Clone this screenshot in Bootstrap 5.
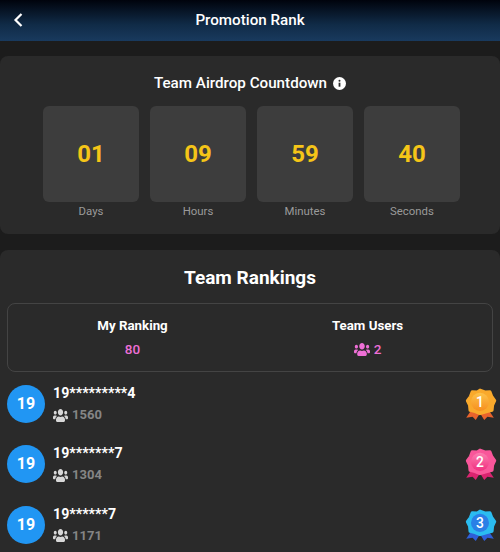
<!DOCTYPE html>
<html lang="en">

<head>
    <meta charset="UTF-8">
    <meta name="viewport" content="width=device-width, initial-scale=1.0">
    <title>Promotion Rank</title>
    <link href="https://cdn.jsdelivr.net/npm/bootstrap@5.3.0/dist/css/bootstrap.min.css" rel="stylesheet">
    <style>
        html, body {
            height: 552px;
            overflow: hidden;
        }

        body {
            background-color: #1c1c1c;
            color: #fff;
            font-family: Roboto, "Liberation Sans", sans-serif;
        }

        .top-bar {
            height: 41px;
            background: linear-gradient(to bottom, #00030c 0%, #102b47 60%, #193a5e 100%);
            position: relative;
        }

        .top-bar h1 {
            font-size: 15.2px;
            font-weight: 500;
            margin: 0;
            line-height: 40px;
        }

        .back-btn {
            position: absolute;
            left: 13px;
            top: 13px;
        }

        .panel {
            background-color: #2a2a2a;
            border-radius: 8px;
        }

        .countdown-panel {
            margin-top: 15px;
            height: 178px;
            padding-top: 18px;
        }

        .countdown-title {
            font-size: 15.2px;
            font-weight: 500;
            line-height: 19px;
            margin-bottom: 13px;
            gap: 6px;
        }

        .time-col {
            width: 96px;
        }

        .time-box {
            height: 96px;
            background-color: #3d3d3d;
            border-radius: 6px;
            color: #f5c518;
            font-size: 24px;
            font-weight: 700;
        }

        .time-label {
            font-size: 11.4px;
            color: #9a9a9a;
            line-height: 14px;
            margin-top: 2px;
        }

        .time-row {
            gap: 11px;
            padding-left: 43px;
        }

        .rank-panel {
            margin-top: 16px;
            height: 320px;
            padding: 16px 7px 0;
        }

        .rank-title {
            font-size: 19px;
            font-weight: 700;
            line-height: 24px;
            margin-bottom: 13px;
        }

        .summary-box {
            height: 69px;
            border: 1px solid #444;
            border-radius: 8px;
            margin-bottom: 13px;
            padding: 0 7px;
        }

        .summary-label {
            font-size: 13.3px;
            font-weight: 700;
            line-height: 17px;
            margin-bottom: 7px;
        }

        .summary-value {
            font-size: 13.5px;
            font-weight: 500;
            line-height: 17px;
            color: #ee6fd6;
        }

        .rank-row {
            height: 38px;
            margin-bottom: 22.4px;
        }

        .avatar {
            width: 38px;
            height: 38px;
            border-radius: 50%;
            background-color: #2196f3;
            font-size: 16px;
            font-weight: 700;
        }

        .user-name {
            font-size: 14.2px;
            font-weight: 700;
            line-height: 17px;
        }

        .user-count {
            font-size: 13px;
            font-weight: 700;
            color: #858585;
            line-height: 16px;
            margin-top: 5px;
        }

        .user-count svg {
            color: #d8d8d8;
        }

        .medal {
            width: 34px;
            height: 34px;
            margin-right: -3.5px;
        }

        .medal text {
            font-family: Roboto, sans-serif;
            font-size: 13px;
            font-weight: 500;
            fill: #fff;
            text-anchor: middle;
        }
    </style>
</head>

<body>
    <svg width="0" height="0" class="position-absolute">
        <defs>
            <symbol id="users" viewBox="0 32 640 448" preserveAspectRatio="none">
                <path fill="currentColor" d="M96 224c35.300 0 64-28.700 64-64s-28.700-64-64-64-64 28.700-64 64 28.700 64 64 64zm448 0c35.300 0 64-28.700 64-64s-28.700-64-64-64-64 28.700-64 64 28.700 64 64 64zm32 32h-64c-17.600 0-33.500 7.100-45.100 18.600 40.300 22.100 68.900 62 75.100 109.400h66c17.700 0 32-14.300 32-32v-32c0-35.300-28.700-64-64-64zm-256 0c61.900 0 112-50.100 112-112S381.900 32 320 32 208 82.100 208 144s50.100 112 112 112zm76.800 32h-8.300c-20.800 10-43.900 16-68.500 16s-47.600-6-68.500-16h-8.300C179.600 288 128 339.600 128 403.200V432c0 26.500 21.500 48 48 48h288c26.500 0 48-21.500 48-48v-28.800c0-63.600-51.600-115.200-115.200-115.200zm-223.700-13.400C161.500 263.100 145.600 256 128 256H64c-35.300 0-64 28.700-64 64v32c0 17.700 14.300 32 32 32h65.900c6.300-47.400 34.900-87.300 75.200-109.400z" />
            </symbol>
            <symbol id="badge" viewBox="0 0 32 32">
                <path d="M16 3l4.500 1.800 4.800-.2 1.700 4.400 2.800 3.800-2 4.200-.5 4.800-4.600 1.200L16 25l-4.700-1.900-4.600-1.200-.5-4.800-2-4.200L7 9l1.700-4.400 4.800.2z" fill="currentColor" stroke="currentColor" stroke-width="3" stroke-linejoin="round" />
            </symbol>
            <linearGradient id="gold" x1="0" y1="0" x2="0" y2="1">
                <stop offset="0" stop-color="#fcc24a" />
                <stop offset="1" stop-color="#f78f1e" />
            </linearGradient>
            <linearGradient id="pink" x1="0" y1="0" x2="0" y2="1">
                <stop offset="0" stop-color="#fb7db0" />
                <stop offset="1" stop-color="#f0307f" />
            </linearGradient>
            <linearGradient id="aqua" x1="0" y1="0" x2="0" y2="1">
                <stop offset="0" stop-color="#45d0f5" />
                <stop offset="1" stop-color="#1f8fe6" />
            </linearGradient>
        </defs>
    </svg>

    <div class="top-bar text-center">
        <a class="back-btn d-block" href="#">
            <svg width="11" height="14" viewBox="0 0 11 14" class="d-block">
                <path d="M8.500 1L2.500 7l6 6" fill="none" stroke="#fff" stroke-width="2.200" />
            </svg>
        </a>
        <h1>Promotion Rank</h1>
    </div>

    <div class="panel countdown-panel">
        <div class="countdown-title d-flex justify-content-center align-items-center">
            <span>Team Airdrop Countdown</span>
            <svg width="13" height="13" viewBox="0 0 13 13">
                <circle cx="6.500" cy="6.500" r="6.500" fill="#fff" />
                <rect x="5.600" y="5.700" width="1.800" height="4" fill="#2a2a2a" />
                <circle cx="6.500" cy="3.800" r="1" fill="#2a2a2a" />
            </svg>
        </div>
        <div class="d-flex time-row">
            <div class="time-col text-center">
                <div class="time-box d-flex align-items-center justify-content-center">01</div>
                <div class="time-label">Days</div>
            </div>
            <div class="time-col text-center">
                <div class="time-box d-flex align-items-center justify-content-center">09</div>
                <div class="time-label">Hours</div>
            </div>
            <div class="time-col text-center">
                <div class="time-box d-flex align-items-center justify-content-center">59</div>
                <div class="time-label">Minutes</div>
            </div>
            <div class="time-col text-center">
                <div class="time-box d-flex align-items-center justify-content-center">40</div>
                <div class="time-label">Seconds</div>
            </div>
        </div>
    </div>

    <div class="panel rank-panel">
        <div class="rank-title text-center">Team Rankings</div>

        <div class="summary-box d-flex align-items-center text-center">
            <div class="w-50">
                <div class="summary-label">My Ranking</div>
                <div class="summary-value">80</div>
            </div>
            <div class="w-50">
                <div class="summary-label">Team Users</div>
                <div class="summary-value d-flex align-items-center justify-content-center gap-1">
                    <svg width="16" height="13"><use href="#users" /></svg>
                    <span>2</span>
                </div>
            </div>
        </div>

        <div class="rank-row d-flex align-items-center">
            <div class="avatar d-flex align-items-center justify-content-center flex-shrink-0">19</div>
            <div class="ms-2 flex-grow-1">
                <div class="user-name">19*********4</div>
                <div class="user-count d-flex align-items-center gap-1">
                    <svg width="15" height="13"><use href="#users" /></svg>
                    <span>1560</span>
                </div>
            </div>
            <svg class="medal" viewBox="0 0 32 32">
                <path d="M9 20l-6 9 6-1 3 3 5-8zM23 20l6 9-6-1-3 3-5-8z" fill="#e8622c" />
                <use href="#badge" width="32" height="32" style="color:#f9a92c" />
                <circle cx="16" cy="14" r="8.500" fill="url(#gold)" />
                <text x="16" y="18.500">1</text>
            </svg>
        </div>

        <div class="rank-row d-flex align-items-center">
            <div class="avatar d-flex align-items-center justify-content-center flex-shrink-0">19</div>
            <div class="ms-2 flex-grow-1">
                <div class="user-name">19*******7</div>
                <div class="user-count d-flex align-items-center gap-1">
                    <svg width="15" height="13"><use href="#users" /></svg>
                    <span>1304</span>
                </div>
            </div>
            <svg class="medal" viewBox="0 0 32 32">
                <path d="M9 20l-6 9 6-1 3 3 5-8zM23 20l6 9-6-1-3 3-5-8z" fill="#d9246f" />
                <use href="#badge" width="32" height="32" style="color:#f9569a" />
                <circle cx="16" cy="14" r="8.500" fill="url(#pink)" />
                <text x="16" y="18.500">2</text>
            </svg>
        </div>

        <div class="rank-row d-flex align-items-center">
            <div class="avatar d-flex align-items-center justify-content-center flex-shrink-0">19</div>
            <div class="ms-2 flex-grow-1">
                <div class="user-name">19******7</div>
                <div class="user-count d-flex align-items-center gap-1">
                    <svg width="15" height="13"><use href="#users" /></svg>
                    <span>1171</span>
                </div>
            </div>
            <svg class="medal" viewBox="0 0 32 32">
                <path d="M9 20l-6 9 6-1 3 3 5-8zM23 20l6 9-6-1-3 3-5-8z" fill="#2f5fd8" />
                <use href="#badge" width="32" height="32" style="color:#2bbcf0" />
                <circle cx="16" cy="14" r="8.500" fill="#2a7fe6" />
                <text x="16" y="18.500">3</text>
            </svg>
        </div>
    </div>

    <script src="https://cdn.jsdelivr.net/npm/bootstrap@5.3.0/dist/js/bootstrap.bundle.min.js"></script>
</body>

</html>
